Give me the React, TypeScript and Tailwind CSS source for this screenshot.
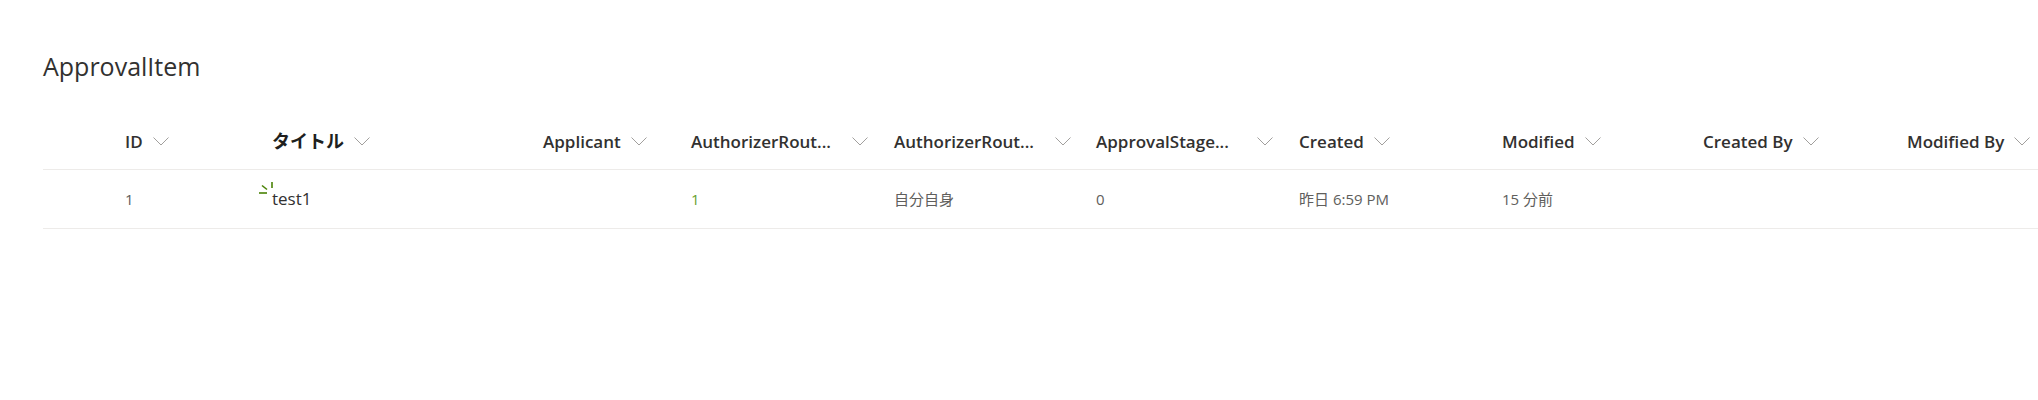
import React from 'react';

const font = '"Segoe UI", "Open Sans", "Noto Sans CJK JP", sans-serif';

const Chevron = () => (
  <svg width="16" height="9" viewBox="0 0 16 9" className="shrink-0">
    <polyline points="0.5,0.5 8,8 15.5,0.5" fill="none" stroke="#a19f9d" strokeWidth="1" />
  </svg>
);

const NewIcon = () => (
  <svg width="16" height="12" viewBox="0 0 16 12" className="absolute left-[-13px] top-[-5px]">
    <line x1="0" y1="11" x2="8" y2="11" stroke="#498205" strokeWidth="1.6" />
    <line x1="3" y1="3.5" x2="8" y2="7.5" stroke="#498205" strokeWidth="1.6" />
    <line x1="13" y1="0" x2="13" y2="6" stroke="#498205" strokeWidth="1.6" />
  </svg>
);

// labels are shown as SharePoint clips them
const columns = [
  { key: 'id', label: 'ID', width: 'w-[147px]' },
  { key: 'title', label: 'タイトル', width: 'w-[271px]', bold: true },
  { key: 'applicant', label: 'Applicant', width: 'w-[148px]' },
  { key: 'route', label: 'AuthorizerRout...', width: 'w-[203px]', fixed: true },
  { key: 'routeName', label: 'AuthorizerRout...', width: 'w-[202px]', fixed: true },
  { key: 'stage', label: 'ApprovalStage...', width: 'w-[203px]', fixed: true },
  { key: 'created', label: 'Created', width: 'w-[203px]' },
  { key: 'modified', label: 'Modified', width: 'w-[201px]' },
  { key: 'createdBy', label: 'Created By', width: 'w-[204px]' },
  { key: 'modifiedBy', label: 'Modified By', width: 'w-[140px]' },
];

const App = () => {
  return (
    <div className="w-[2038px] h-[400px] bg-white overflow-hidden" style={{ fontFamily: font }}>
      <div className="pl-[43px] pt-[48px] h-[84px] text-[25px] leading-[36px] text-[#323130]">
        ApprovalItem
      </div>
      <div className="ml-[43px] mt-[30px]">
        <div className="flex h-[56px] items-center border-b border-[#edebe9] pl-[82px]">
          {columns.map((col) => (
            <div key={col.key} className={`${col.width} shrink-0 flex items-center gap-[10px]`}>
              <span
                className={
                  col.bold
                    ? 'text-[18px] font-bold text-[#201f1e] whitespace-nowrap'
                    : col.fixed
                    ? 'text-[17px] font-semibold text-[#323130] whitespace-nowrap w-[151px]'
                    : 'text-[17px] font-semibold text-[#323130] whitespace-nowrap'
                }
              >
                {col.label}
              </span>
              <Chevron />
            </div>
          ))}
        </div>
        <div className="flex h-[59px] items-center border-b border-[#edebe9] pl-[82px] text-[15px] text-[#605e5c]">
          <div className="w-[147px] shrink-0">1</div>
          <div className="w-[271px] shrink-0">
            <span className="relative text-[17px] text-[#323130]">
              <NewIcon />
              test1
            </span>
          </div>
          <div className="w-[148px] shrink-0"></div>
          <div className="w-[203px] shrink-0 text-[#6a9f2f]">1</div>
          <div className="w-[202px] shrink-0">自分自身</div>
          <div className="w-[203px] shrink-0">0</div>
          <div className="w-[203px] shrink-0">昨日 6:59 PM</div>
          <div className="w-[201px] shrink-0">15 分前</div>
          <div className="w-[204px] shrink-0"></div>
          <div className="w-[140px] shrink-0"></div>
        </div>
      </div>
    </div>
  );
};

export default App;
